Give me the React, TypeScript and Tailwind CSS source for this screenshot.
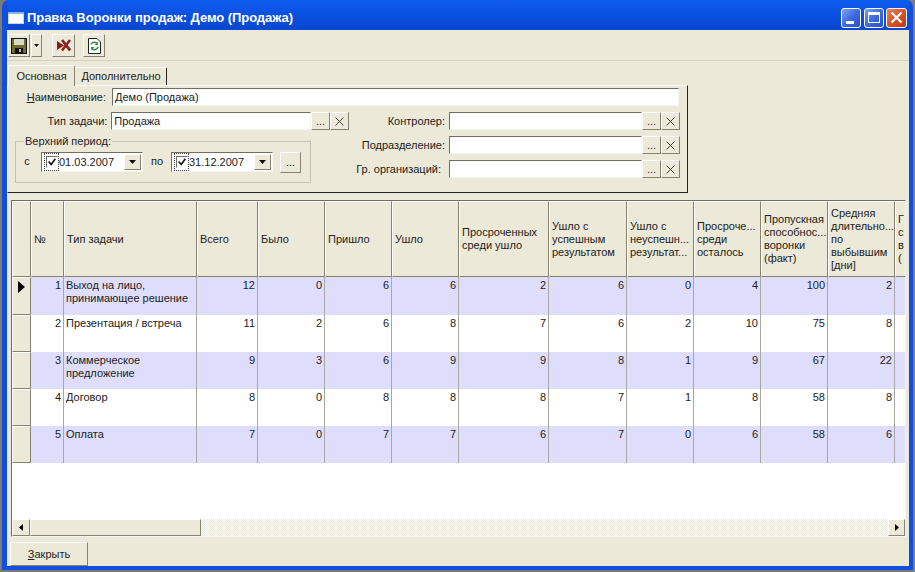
import React from "react";

const font = { fontFamily: '"Liberation Sans", Arial, sans-serif' };

const cols = [
  { w: 33, h: ["№"] },
  { w: 133, h: ["Тип задачи"] },
  { w: 61, h: ["Всего"] },
  { w: 67, h: ["Было"] },
  { w: 67, h: ["Пришло"] },
  { w: 67, h: ["Ушло"] },
  { w: 90, h: ["Просроченных", "среди ушло"] },
  { w: 78, h: ["Ушло с", "успешным", "результатом"] },
  { w: 67, h: ["Ушло с", "неуспешн...", "результат..."] },
  { w: 67, h: ["Просроче...", "среди", "осталось"] },
  { w: 67, h: ["Пропускная", "способнос...", "воронки", "(факт)"] },
  { w: 67, h: ["Средняя", "длительно...", "по", "выбывшим", "[дни]"] },
  { w: 20, h: ["Г", "с", "в", "("] },
];

const rows: { h: number; name: string[]; v: (number | string)[] }[] = [
  { h: 38, name: ["Выход на лицо,", "принимающее решение"], v: [12, 0, 6, 6, 2, 6, 0, 4, 100, 2, ""] },
  { h: 37, name: ["Презентация / встреча"], v: [11, 2, 6, 8, 7, 6, 2, 10, 75, 8, ""] },
  { h: 37, name: ["Коммерческое", "предложение"], v: [9, 3, 6, 9, 9, 8, 1, 9, 67, 22, ""] },
  { h: 37, name: ["Договор"], v: [8, 0, 8, 8, 8, 7, 1, 8, 58, 8, ""] },
  { h: 37, name: ["Оплата"], v: [7, 0, 7, 7, 6, 7, 0, 6, 58, 6, ""] },
];

const raised = "border border-t-white border-l-white border-r-[#85836f] border-b-[#85836f] bg-[#ece9d8]";
const sunken = "border border-t-[#716f64] border-l-[#716f64] border-r-[#f6f5ee] border-b-[#f6f5ee] bg-white";

function SmallBtn({ children }: { children: React.ReactNode }) {
  return (
    <div className={`flex h-[18px] w-[19px] shrink-0 items-center justify-center text-[11px] leading-none text-[#333] ${raised}`}>
      {children}
    </div>
  );
}

function XIcon() {
  return (
    <svg width="9" height="9" viewBox="0 0 9 9" fill="none" stroke="#333" strokeWidth="0.9">
      <path d="M0.5 0.5 8.5 8.5M8.5 0.5 0.5 8.5" />
    </svg>
  );
}

function LookupField({ label, narrow }: { label: string; narrow?: boolean }) {
  return (
    <div className="flex h-[18px] items-center">
      <div className={`w-[100px] text-right text-[#222] ${narrow ? "pr-[8px]" : "pr-[4px]"}`}>{label}</div>
      <div className={`h-[18px] w-[193px] ${sunken}`} />
      <SmallBtn>...</SmallBtn>
      <SmallBtn>
        <XIcon />
      </SmallBtn>
    </div>
  );
}

function DateCombo({ value }: { value: string }) {
  return (
    <div className={`flex h-[20px] w-[102px] items-center pl-[2px] ${sunken}`}>
      <div className="flex h-[18px] w-[15px] shrink-0 items-center justify-center border border-dotted border-[#444]">
        <svg width="12" height="12" viewBox="0 0 12 12" className="border border-t-[#716f64] border-l-[#716f64] border-r-white border-b-white">
          <path d="M2 5.5 5 9 10 2" fill="none" stroke="#111" strokeWidth="1.9" />
        </svg>
      </div>
      <span className="mt-[1px] text-[#222]">{value}</span>
      <div className="ml-auto mr-[1px]">
        <div className={`flex h-[16px] w-[17px] items-center justify-center ${raised}`}>
          <svg width="7" height="4" viewBox="0 0 7 4"><path d="M0 0H7L3.5 4Z" fill="#111" /></svg>
        </div>
      </div>
    </div>
  );
}

export default function App() {
  return (
    <div className="h-[572px] w-[915px] overflow-hidden bg-[#7b7b7b] px-[2px] pb-[2px] text-[11px] leading-[13px]" style={font}>
      <div className="flex h-[570px] flex-col overflow-hidden rounded-t-[7px] bg-[#0f4fdc] pb-[4px] pl-[5px] pr-[4px]">
        {/* Title bar */}
        <div className="flex h-[30px] shrink-0 items-center bg-gradient-to-b from-[#0f5cec] via-[#0a50e0] to-[#0b47cf] pl-[1px] pr-[2px] pt-[5px]">
          <svg width="16" height="12" viewBox="0 0 16 12" className="mr-[3px]">
            <rect x="0.5" y="0.5" width="15" height="11" fill="#fff" stroke="#c8d4ee" />
            <rect x="0" y="0" width="16" height="2" fill="#8fb0ea" />
          </svg>
          <span className="text-[13px] font-bold tracking-[-0.07px] text-white">Правка Воронки продаж: Демо (Продажа)</span>
          <div className="ml-auto flex">
            <div className="flex h-[20px] w-[20px] items-end justify-start rounded-[3px] border border-white bg-gradient-to-br from-[#7da0ef] via-[#3f6ae0] to-[#2a4fc8] pb-[3px] pl-[4px]">
              <div className="h-[3px] w-[8px] bg-white" />
            </div>
            <div className="ml-[3px] flex h-[20px] w-[20px] items-center justify-center rounded-[3px] border border-white bg-gradient-to-br from-[#7da0ef] via-[#3f6ae0] to-[#2a4fc8]">
              <div className="h-[11px] w-[12px] border border-t-[3px] border-white" />
            </div>
            <div className="ml-[2px] flex h-[20px] w-[21px] items-center justify-center rounded-[3px] border border-white bg-gradient-to-br from-[#e8805f] via-[#d9532c] to-[#b93a12]">
              <svg width="13" height="13" viewBox="0 0 13 13"><path d="M1.5 1.5 11.5 11.5M11.5 1.5 1.5 11.5" stroke="#fff" strokeWidth="2.2" /></svg>
            </div>
          </div>
        </div>

        {/* Client */}
        <div className="flex min-h-0 flex-1 flex-col bg-[#ece9d8]">
          {/* Toolbar */}
          <div className="flex h-[31px] shrink-0 items-start border-b border-b-[#d5d2c0] pl-[1px] pt-[4px]">
            <div className={`flex h-[23px] w-[22px] items-center justify-center ${raised}`}>
              <svg width="16" height="16" viewBox="0 0 16 16">
                <rect x="0.5" y="0.5" width="15" height="15" fill="#6d6d2a" stroke="#111" />
                <rect x="3" y="1" width="10" height="6" fill="#d8d8c8" />
                <rect x="4" y="10" width="8" height="5" fill="#111" />
                <rect x="8" y="11" width="2" height="3" fill="#bbb" />
              </svg>
            </div>
            <div className={`ml-[1px] flex h-[23px] w-[11px] items-center justify-center ${raised}`}>
              <svg width="5" height="3" viewBox="0 0 5 3"><path d="M0 0H5L2.5 3Z" fill="#111" /></svg>
            </div>
            <div className={`ml-[10px] flex h-[23px] w-[23px] items-center justify-center ${raised}`}>
              <svg width="16" height="13" viewBox="0 0 16 13">
                <path d="M1 2 8 6.5 1 11Z" fill="#8a1c1c" />
                <path d="M6 11.5 14 1M6 1 14 11.5" stroke="#8a1c1c" strokeWidth="2.4" />
                <path d="M7 0.5 15 10.5" stroke="#555" strokeWidth="0.7" />
              </svg>
            </div>
            <div className={`ml-[8px] flex h-[23px] w-[22px] items-center justify-center ${raised}`}>
              <svg width="13" height="16" viewBox="0 0 13 16">
                <path d="M0.5 0.5H9L12.5 4V15.5H0.5Z" fill="#fff" stroke="#222" />
                <path d="M3 6.5A3.5 3.5 0 0 1 9 5.5M10 9A3.5 3.5 0 0 1 4 10.5" fill="none" stroke="#1a9a2a" strokeWidth="1.5" />
                <path d="M9.8 3.5V7H6.6ZM3.2 12.5V9H6.4Z" fill="#1a9a2a" />
              </svg>
            </div>
          </div>

          {/* Tabs */}
          <div className="mt-[5px] flex h-[19px] shrink-0 items-end pl-[1px]">
            <div className="relative z-10 mb-[-1px] flex h-[21px] w-[67px] items-center justify-center rounded-t-[2px] border border-b-0 border-t-white border-l-white border-r-[#85836f] bg-[#ece9d8] text-[#222]">
              Основная
            </div>
            <div className="flex h-[18px] w-[92px] items-center justify-center rounded-t-[2px] border border-b-0 border-t-white border-l-transparent border-r-[#222] text-[#222]">
              Дополнительно
            </div>
          </div>

          {/* Panel */}
          <div className="h-[108px] w-[681px] shrink-0 border border-t-white border-l-white border-r-[#222] border-b-[#222] pl-[2px] pt-[2px]">
            <div className="flex h-[18px] items-center">
              <div className="w-[102px] pr-[6px] text-right text-[#222]">
                <span className="underline">Н</span>аименование:
              </div>
              <div className={`flex h-[18px] w-[567px] items-center pl-[2px] text-[#222] ${sunken}`}>Демо (Продажа)</div>
            </div>
            <div className="mt-[6px] flex">
              <div className="w-[339px] shrink-0">
                <div className="flex h-[18px] items-center">
                  <div className="w-[102px] pr-[4px] text-right text-[#222]">Тип задачи:</div>
                  <div className={`flex h-[18px] w-[201px] items-center pl-[2px] text-[#222] ${sunken}`}>Продажа</div>
                  <SmallBtn>...</SmallBtn>
                  <SmallBtn>
                    <XIcon />
                  </SmallBtn>
                </div>
                <div className="relative ml-[5px] mt-[11px] flex h-[42px] w-[296px] items-start border border-[#c4c1ad] pl-[6px] pt-[10px]">
                  <span className="absolute left-[8px] top-[-7px] bg-[#ece9d8] px-[1px] text-[#222]">Верхний период:</span>
                  <span className="mr-[9px] mt-[3px] w-[10px] text-center text-[#222]">с</span>
                  <DateCombo value="01.03.2007" />
                  <span className="mx-[8px] mt-[3px] w-[12px] text-center text-[#222]">по</span>
                  <DateCombo value="31.12.2007" />
                  <div className={`ml-[7px] flex h-[21px] w-[21px] items-center justify-center ${raised}`}>...</div>
                </div>
              </div>
              <div className="flex flex-col gap-[6px]">
                <LookupField label="Контролер:" />
                <LookupField label="Подразделение:" />
                <LookupField label="Гр. организаций:" narrow />
              </div>
            </div>
          </div>

          {/* Grid */}
          <div className={`ml-[4px] mt-[7px] flex h-[337px] w-[895px] shrink-0 flex-col overflow-hidden ${sunken}`}>
            <div className="min-h-0 flex-1 overflow-hidden">
              {/* Header */}
              <div className="flex h-[76px]">
                <div className={`h-[76px] w-[19px] shrink-0 ${raised}`} />
                {cols.map((c, i) => (
                  <div
                    key={i}
                    className={`flex h-[76px] shrink-0 flex-col justify-center overflow-hidden pl-[2px] text-[#222] ${raised}`}
                    style={{ width: c.w }}
                  >
                    {c.h.map((t) => (
                      <div key={t} className="whitespace-nowrap">{t}</div>
                    ))}
                  </div>
                ))}
              </div>
              {/* Rows */}
              {rows.map((r, ri) => (
                <div key={ri} className={`flex ${ri % 2 === 0 ? "bg-[#dedefc]" : "bg-white"}`} style={{ height: r.h }}>
                  <div className={`flex w-[19px] shrink-0 items-start justify-center pt-[3px] ${raised}`}>
                    {ri === 0 && (
                      <svg width="7" height="12" viewBox="0 0 7 12"><path d="M0 0 7 6 0 12Z" fill="#000" /></svg>
                    )}
                  </div>
                  <div className="w-[33px] shrink-0 border-r border-r-[#a8a8a0] pr-[2px] pt-[2px] text-right text-[#222]">{ri + 1}</div>
                  <div className="w-[133px] shrink-0 border-r border-r-[#a8a8a0] pl-[2px] pt-[2px] text-[#222]">
                    {r.name.map((n) => (
                      <div key={n}>{n}</div>
                    ))}
                  </div>
                  {r.v.map((v, i) => (
                    <div
                      key={i}
                      className="shrink-0 border-r border-r-[#a8a8a0] pr-[2px] pt-[2px] text-right text-[#222]"
                      style={{ width: cols[i + 2].w }}
                    >
                      {v}
                    </div>
                  ))}
                </div>
              ))}
            </div>
            {/* Scrollbar */}
            <div className="flex h-[17px] shrink-0 bg-[repeating-conic-gradient(#ece9d8_0_25%,#ffffff_0_50%)] bg-[length:2px_2px]">
              <div className={`flex h-[17px] w-[18px] items-center justify-center ${raised}`}>
                <svg width="4" height="7" viewBox="0 0 4 7"><path d="M4 0V7L0 3.5Z" fill="#000" /></svg>
              </div>
              <div className={`h-[17px] w-[171px] ${raised}`} />
              <div className="flex-1" />
              <div className={`flex h-[17px] w-[17px] items-center justify-center ${raised}`}>
                <svg width="4" height="7" viewBox="0 0 4 7"><path d="M0 0V7L4 3.5Z" fill="#000" /></svg>
              </div>
            </div>
          </div>

          {/* Footer */}
          <div className="pl-[3px] pt-[5px]">
            <div className={`flex h-[24px] w-[78px] items-center justify-center text-[#222] ${raised}`}>
              <span>
                <span className="underline">З</span>акрыть
              </span>
            </div>
          </div>
        </div>
      </div>
    </div>
  );
}
